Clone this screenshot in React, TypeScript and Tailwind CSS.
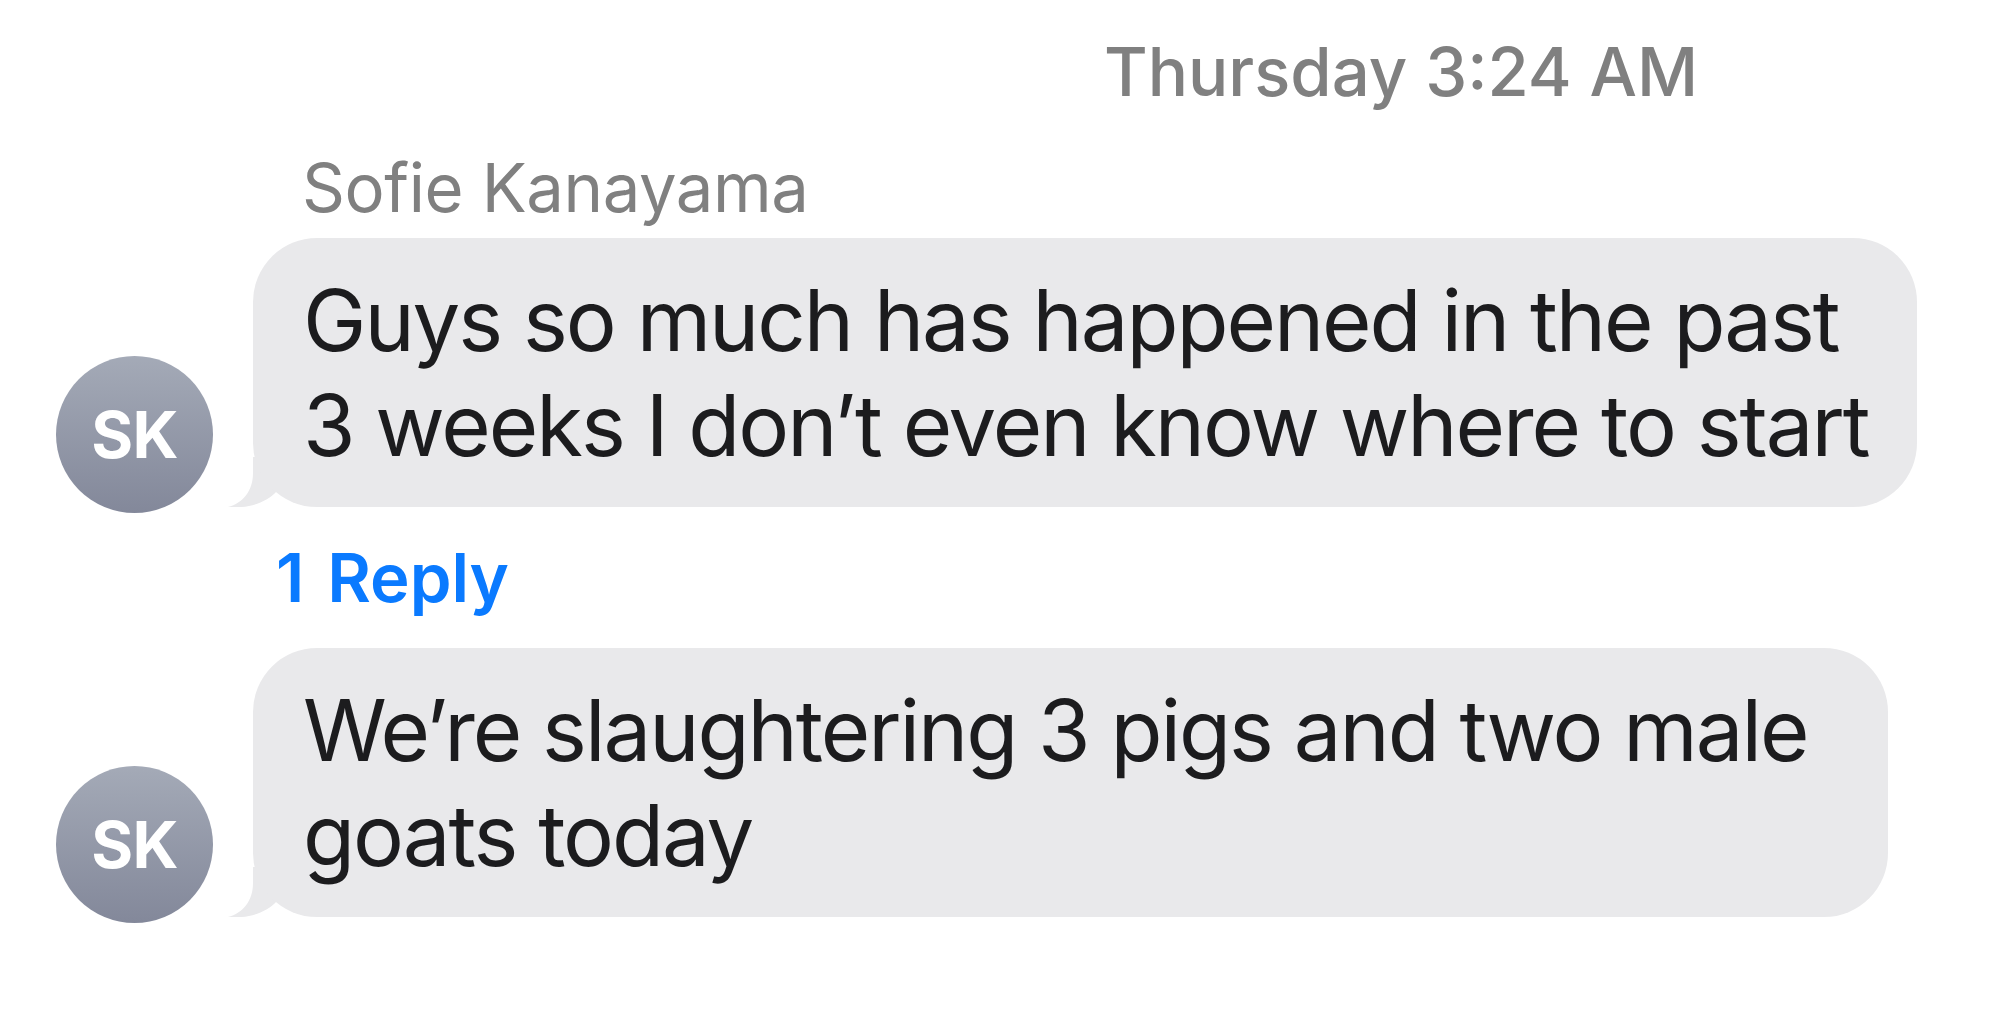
import type React from "react";

const font = "font-['Inter','Noto_Sans',sans-serif]";

const Avatar: React.FC<{ initials: string }> = ({ initials }) => (
  <div className="w-[157px] h-[157px] shrink-0 rounded-full bg-gradient-to-b from-[#a4aab7] to-[#83889a] flex items-center justify-center">
    <span className={`${font} text-white font-bold text-[64px] leading-none tracking-[-0.01em]`}>{initials}</span>
  </div>
);

// iMessage style curl at the bottom-left corner of an incoming bubble
const Tail: React.FC = () => (
  <svg
    className="absolute left-[-26px] bottom-0"
    width="60"
    height="50"
    viewBox="0 0 60 50"
  >
    <path d="M26 0 L26 16 C26 34 16 46 1 50 C20 51.5 38 47 50 34 L50 0 Z" fill="#e9e9eb" />
  </svg>
);

const Bubble: React.FC<{ children: React.ReactNode; padRight: string }> = ({ children, padRight }) => (
  <div className="relative mb-[6px]">
    <Tail />
    <div
      className={`${font} ${padRight} relative bg-[#e9e9eb] rounded-[64px] pt-[30px] pb-[29px] pl-[50px] text-[85px] leading-[105px] text-[#1c1c1e] whitespace-nowrap tracking-[-0.024em]`}
    >
      {children}
    </div>
  </div>
);

export default function App() {
  return (
    <div className="w-[2000px] h-[1031px] bg-white overflow-hidden pt-[32px]">
      {/* Timestamp */}
      <div className={`${font} pl-[1104px] text-[67px] leading-[80px] font-medium text-[#808080]`}>
        Thursday 3:24 AM
      </div>

      {/* Sender name */}
      <div className={`${font} mt-[36px] pl-[302px] text-[67px] leading-[80px] text-[#808080] tracking-[-0.006em]`}>
        Sofie Kanayama
      </div>

      <div className="mt-[10px] flex items-end gap-[40px] pl-[56px]">
        <Avatar initials="SK" />
        <Bubble padRight="pr-[49px]">
          Guys so much has happened in the past
          <br />3 weeks I don’t even know where to start
        </Bubble>
      </div>

      <div className={`${font} mt-[25px] pl-[276px] text-[67px] leading-[80px] font-semibold text-[#0a7aff] [word-spacing:6px]`}>
        1 Reply
      </div>

      <div className="mt-[30px] flex items-end gap-[40px] pl-[56px]">
        <Avatar initials="SK" />
        <Bubble padRight="pr-[80px]">
          We’re slaughtering 3 pigs and two male
          <br />goats today
        </Bubble>
      </div>
    </div>
  );
}
